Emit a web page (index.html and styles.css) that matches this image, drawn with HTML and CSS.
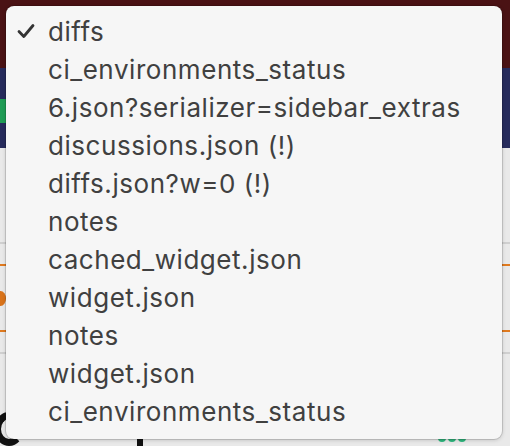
FILE: index.html
```html
<!DOCTYPE html>
<html>
<head>
<meta charset="utf-8">
<link rel="stylesheet" href="styles.css">
</head>
<body>
<div class="page">
  <header class="topbar"></header>
  <nav class="navbar"><span class="badge"></span></nav>
  <main class="content">
    <div class="row row-a"></div>
    <div class="row row-b"></div>
    <div class="row row-c"><span class="dot"></span></div>
    <div class="footer-bits">
      <span class="big-c"></span>
      <span class="bar"></span>
      <span class="greens"><i></i><i></i><i></i></span>
    </div>
  </main>
</div>

<div class="menu">
  <div class="item checked"><svg class="check" viewBox="0 0 18 16" width="18" height="16"><path d="M2 8.5 L6.8 13.5 L16 2.5" fill="none" stroke="#333" stroke-width="2.8" stroke-linecap="round" stroke-linejoin="round"/></svg><span>diffs</span></div>
  <div class="item"><span>ci_environments_status</span></div>
  <div class="item"><span>6.json?serializer=sidebar_extras</span></div>
  <div class="item"><span>discussions.json (!)</span></div>
  <div class="item"><span>diffs.json?w=0 (!)</span></div>
  <div class="item"><span>notes</span></div>
  <div class="item"><span>cached_widget.json</span></div>
  <div class="item"><span>widget.json</span></div>
  <div class="item"><span>notes</span></div>
  <div class="item"><span>widget.json</span></div>
  <div class="item"><span>ci_environments_status</span></div>
</div>
</body>
</html>
```

FILE: styles.css
```css
html, body {
  margin: 0;
  padding: 0;
  width: 510px;
  height: 446px;
  overflow: hidden;
  font-family: Inter, "Liberation Sans", sans-serif;
}
.page {
  display: flex;
  flex-direction: column;
  height: 446px;
}
.topbar {
  height: 68px;
  background: #4a1214;
}
.navbar {
  height: 80px;
  background: #262b5c;
  display: flex;
  align-items: center;
}
.badge {
  display: block;
  width: 8px;
  height: 24px;
  background: #1f9d55;
  margin-top: 6px;
}
.content {
  flex: 1;
  background: #e9e9e9;
  display: flex;
  flex-direction: column;
}
.row-a {
  height: 94px;
  border-bottom: 2px solid #cfcfcf;
}
.row-b, .row-c {
  border-bottom: 2px solid #e07a1f;
}
.row-b { height: 20px; }
.row-c { height: 64px; position: relative; }
.dot {
  position: absolute;
  left: -5px;
  top: 25px;
  width: 11px;
  height: 15px;
  border-radius: 50%;
  background: #d9731a;
}
.footer-bits { flex: 1; position: relative; border-top: 2px solid #cfcfcf; margin-top: 20px; }
.big-c {
  position: absolute;
  left: -6px;
  top: 58px;
  width: 30px;
  height: 34px;
  box-sizing: border-box;
  border: 7px solid #111;
  border-right-color: transparent;
  border-radius: 50%;
}
.bar {
  position: absolute;
  left: 137px;
  top: 72px;
  width: 6px;
  height: 30px;
  background: #111;
}
.greens {
  position: absolute;
  left: 438px;
  top: 80px;
  display: flex;
  gap: 2px;
}
.greens i {
  display: block;
  width: 8px;
  height: 8px;
  background: #2eb67d;
  border-radius: 50%;
}
.menu {
  position: absolute;
  left: 6px;
  top: 6px;
  width: 496px;
  height: 433px;
  box-sizing: border-box;
  padding: 6px 0;
  background: #f6f6f6;
  border-radius: 8px;
  box-shadow: 0 0 0 1px rgba(0,0,0,0.12), 0 1px 4px rgba(0,0,0,0.18);
  display: flex;
  flex-direction: column;
}
.item {
  height: 38px;
  display: flex;
  align-items: center;
  padding-left: 42px;
  position: relative;
  font-size: 26px;
  color: #404040;
  letter-spacing: 0.55px;
}
.check {
  position: absolute;
  left: 11px;
  top: 11px;
}
```
